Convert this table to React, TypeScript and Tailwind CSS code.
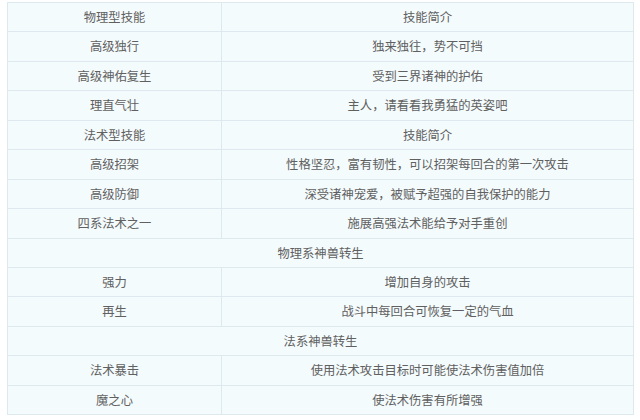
const rows: [string, string?][] = [
  ['物理型技能', '技能简介'],
  ['高级独行', '独来独往，势不可挡'],
  ['高级神佑复生', '受到三界诸神的护佑'],
  ['理直气壮', '主人，请看看我勇猛的英姿吧'],
  ['法术型技能', '技能简介'],
  ['高级招架', '性格坚忍，富有韧性，可以招架每回合的第一次攻击'],
  ['高级防御', '深受诸神宠爱，被赋予超强的自我保护的能力'],
  ['四系法术之一', '施展高强法术能给予对手重创'],
  ['物理系神兽转生'],
  ['强力', '增加自身的攻击'],
  ['再生', '战斗中每回合可恢复一定的气血'],
  ['法系神兽转生'],
  ['法术暴击', '使用法术攻击目标时可能使法术伤害值加倍'],
  ['魔之心', '使法术伤害有所增强'],
];

export default function App() {
  return (
    <div className="w-[640px] h-[420px] bg-white pt-[2px] pl-[7px] font-['Noto_Sans_CJK_SC',sans-serif]">
      <table className="w-[627px] border-collapse bg-[#f4fbfd] text-[12.3px] text-[#606060]">
        <tbody>
          {rows.map(([a, b]) => (
            <tr key={a} className="h-[29.45px]">
              {b === undefined ? (
                <td colSpan={2} className="border border-[#dde9ef] text-center p-0">{a}</td>
              ) : (
                <>
                  <td className="w-[214px] border border-[#dde9ef] text-center p-0">{a}</td>
                  <td className="border border-[#dde9ef] text-center p-0">{b}</td>
                </>
              )}
            </tr>
          ))}
        </tbody>
      </table>
    </div>
  );
}
